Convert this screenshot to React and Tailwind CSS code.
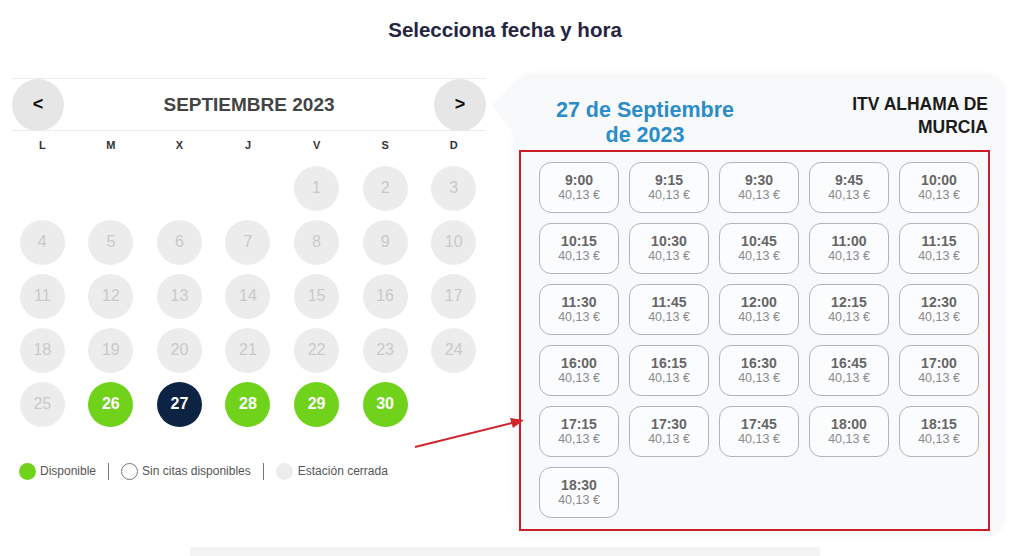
import React from "react";

// Días de septiembre 2023 (empieza en viernes)
const weekDays = ["L", "M", "X", "J", "V", "S", "D"];

const buildDays = () => {
    const cells = [];
    for (let i = 0; i < 4; i++) cells.push(null);
    for (let d = 1; d <= 30; d++) cells.push(d);
    return cells;
};

const slots = [
    "9:00", "9:15", "9:30", "9:45", "10:00",
    "10:15", "10:30", "10:45", "11:00", "11:15",
    "11:30", "11:45", "12:00", "12:15", "12:30",
    "16:00", "16:15", "16:30", "16:45", "17:00",
    "17:15", "17:30", "17:45", "18:00", "18:15",
    "18:30",
];

const DayCell = ({ day }) => {
    if (!day) return <div className="h-[54px]" />;
    let cls = "bg-[#ececec] text-[#c9c9c9]";
    if (day === 27) cls = "bg-[#0c2343] text-white font-bold";
    else if (day >= 26) cls = "bg-[#70d21a] text-white font-bold";
    return (
        <div className="h-[54px] flex items-center justify-center">
            <div
                className={`w-[45px] h-[45px] rounded-full flex items-center justify-center text-[16px] ${cls}`}
            >
                {day}
            </div>
        </div>
    );
};

const Slot = ({ time }) => (
    <div className="w-[80px] h-[51px] rounded-[12px] border border-[#b3b3b3] bg-[#fbfcfd] flex flex-col items-center justify-center leading-[15px]">
        <span className="text-[14px] font-bold text-[#666]">{time}</span>
        <span className="text-[12.5px] text-[#8a8a8a]">40,13 €</span>
    </div>
);

const App = () => {
    const days = buildDays();

    return (
        <div className="relative w-[1024px] h-[556px] overflow-hidden bg-white font-['Liberation_Sans',Arial,sans-serif]">
            <h1 className="pt-[18px] text-center text-[20.5px] font-bold text-[#25253f] leading-[24px]">
                <span className="relative left-[-7px]">Selecciona fecha y hora</span>
            </h1>

            <div className="flex mt-[33px]">
                {/* Calendario */}
                <div className="ml-[8px] w-[480px] pt-[3px]">
                    <div className="ml-[4px] w-[474px] h-[53px] border-y border-[#ececec] flex items-center justify-between">
                        <div className="w-[52px] h-[52px] rounded-full bg-[#e6e6e6] flex items-center justify-center text-[18px] font-bold text-[#111]">
                            &lt;
                        </div>
                        <span className="text-[19px] font-bold text-[#444] relative top-[1px]">SEPTIEMBRE 2023</span>
                        <div className="w-[52px] h-[52px] rounded-full bg-[#e6e6e6] flex items-center justify-center text-[18px] font-bold text-[#111]">
                            &gt;
                        </div>
                    </div>
                    <div className="grid grid-cols-7 mt-[7px] h-[14px]">
                        {weekDays.map((w) => (
                            <span key={w} className="text-center text-[11px] font-bold text-[#333] leading-[14px]">
                                {w}
                            </span>
                        ))}
                    </div>
                    <div className="grid grid-cols-7 mt-[9px]">
                        {days.map((d, i) => (
                            <DayCell key={i} day={d} />
                        ))}
                    </div>
                    <div className="flex items-center mt-[31px] ml-[11px] text-[12px] text-[#555]">
                        <span className="w-[17px] h-[17px] rounded-full bg-[#70d21a] mr-[4px]" />
                        <span>Disponible</span>
                        <span className="w-px h-[17px] bg-[#777] mx-[12px]" />
                        <span className="w-[17px] h-[17px] rounded-full border border-[#777] bg-white mr-[4px]" />
                        <span>Sin citas disponibles</span>
                        <span className="w-px h-[17px] bg-[#777] mx-[12px]" />
                        <span className="w-[17px] h-[17px] rounded-full bg-[#ececec] mr-[5px]" />
                        <span>Estación cerrada</span>
                    </div>
                </div>

                {/* Panel de horas */}
                <div className="relative ml-[27px] w-[488px] h-[460px] rounded-[16px] bg-[#f7f9fb] shadow-[0_0_6px_rgba(0,0,0,0.06)] pl-[4px] pr-[13px]">
                    <svg
                        className="absolute left-[-23px] top-[5px]"
                        width="24"
                        height="58"
                        viewBox="0 0 24 58"
                    >
                        <polygon points="24,0 0,25 24,56" fill="#f7f9fb" />
                    </svg>
                    <div className="flex justify-between h-[75px] pt-[22px]">
                        <div className="w-[252px] text-center text-[21.5px] font-bold text-[#2a8cc8] leading-[25px] mt-[1px]">
                            27 de Septiembre
                            <br />
                            de 2023
                        </div>
                        <div className="text-right text-[17.5px] font-bold text-[#1b1b1b] leading-[23px] mt-[-4px] mr-[2px]">
                            ITV ALHAMA DE
                            <br />
                            MURCIA
                        </div>
                    </div>
                    <div className="border-2 border-[#cc1c27] h-[381px] pl-[18px] pt-[10px]">
                        <div className="grid grid-cols-[repeat(5,80px)] gap-[10px]">
                            {slots.map((s) => (
                                <Slot key={s} time={s} />
                            ))}
                        </div>
                    </div>
                </div>
            </div>

            {/* Flecha roja */}
            <svg
                className="absolute left-0 top-0 pointer-events-none"
                width="1024"
                height="556"
                viewBox="0 0 1024 556"
            >
                <line x1="415" y1="447" x2="512" y2="423" stroke="#d0242b" strokeWidth="2" />
                <polygon points="524,420 510,418 513,428" fill="#d0242b" />
            </svg>

            <div className="absolute left-[190px] bottom-0 w-[630px] h-[9px] bg-[#f3f3f3]" />
        </div>
    );
};

export default App;
